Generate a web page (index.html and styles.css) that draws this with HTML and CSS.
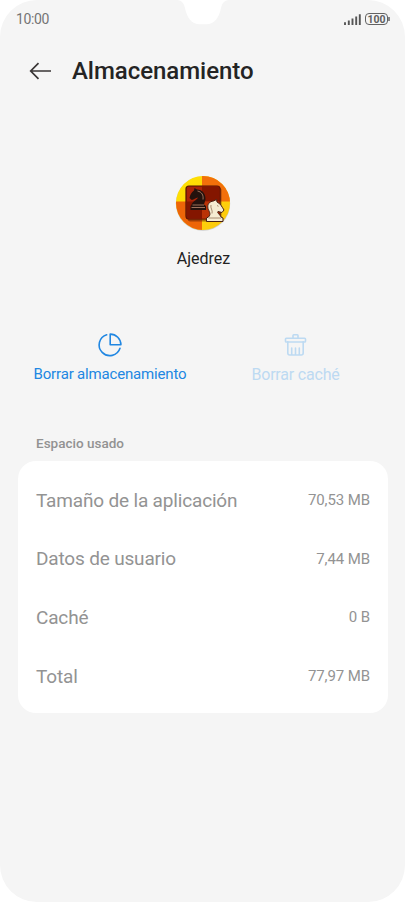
FILE: index.html
```html
<!DOCTYPE html>
<html lang="es">
<head>
<meta charset="utf-8">
<title>Almacenamiento</title>
<link rel="stylesheet" href="styles.css">
</head>
<body>
<main class="screen">
  <svg class="notch" width="52" height="25" viewBox="0 0 52 25" aria-hidden="true"><path d="M0 0C5 .5 7 3.500 8 8C9.800 17 14 24.300 23 24.300H29C38 24.300 42.200 17 44 8C45 3.500 47 .5 52 0Z"/></svg>
  <div class="status">
    <span class="time">10:00</span>
    <span class="indicators">
      <svg width="18" height="13" viewBox="0 0 18 13"><path d="M1 9.200V12M4.800 7.400V12M8.500 5.400V12M12.200 3.500V12M15.800 1.200V12" fill="none" stroke="#555" stroke-width="1.900"/></svg>
      <span class="battery">100</span>
    </span>
  </div>
  <header class="header">
    <svg width="24" height="20" viewBox="0 0 24 20"><path d="M9.500 2.200L1.700 10L9.500 17.800M1.700 10H22" fill="none" stroke="#3a3636" stroke-width="1.700"/></svg>
    <h1>Almacenamiento</h1>
  </header>
  <section class="app">
    <svg width="58" height="58" viewBox="0 0 58 58">
      <defs>
        <clipPath id="round"><circle cx="29" cy="29" r="27"/></clipPath>
        <linearGradient id="gold" x2="1" y2="1"><stop stop-color="#ffe600"/><stop offset="1" stop-color="#fcc410"/></linearGradient>
      </defs>
      <circle cx="29" cy="29.600" r="27.200" fill="#ccc"/>
      <g clip-path="url(#round)">
        <path fill="url(#gold)" d="M0 0H58V58H0Z"/>
        <path fill="#f2700a" d="M28 0H58V27.500H28Z"/><path fill="#ed6508" d="M0 27.500H28V58H0Z"/>
        <rect x="13.500" y="13.500" width="34" height="34" rx="3" fill="#531703" opacity=".5"/>
        <rect x="12" y="12" width="34" height="33" rx="3" fill="#a92408" stroke="#501202" stroke-width="1.200"/>
        <path fill="#841600" d="M28 12.600H45.400V27.500H28ZM12.600 27.500H28V44.400H12.600Z"/>
        <path fill="#ba3307" d="M28 27.500H45.400V44.400H28Z"/>
      </g>
      <path d="M17.500 31C17.500 28 23 26 24 23.500C21.500 24 20 25.800 17.800 26L15.500 24C16 21 17.500 18 20 16.500L20.500 14L23 15.500C28.500 15.500 31.800 20 31.500 25.500L30 30.500L32 32V36H16.500V32Z" fill="#24120d"/>
      <path d="M17.500 33.500H31M18.500 31H30M23.500 17C27.800 18 29.600 21 29 25.500" fill="none" stroke="#bd8a70" stroke-width=".8"/>
      <path d="M34.500 43C37.500 40 35 37.500 34 34.500C33 30 35.500 27.500 39.500 27L42.500 25.500L43 28C46.500 29.500 48 33 50 36L48 38.500L44 37.500C42.500 38.500 46 40.500 47 43L49 44V47.500H32.500V44Z" fill="#f6ecd2" stroke="#472015" stroke-width="1"/>
      <path d="M34.500 44H47M37 31C36 34 39 36 38 39.500M43 31.500L44.500 32.300" fill="none" stroke="#947358" stroke-width=".8"/>
    </svg>
    <span class="app-name">Ajedrez</span>
  </section>
  <nav class="actions">
    <div class="action clear-data">
      <svg width="26" height="26" viewBox="0 0 26 26" fill="none" stroke="currentColor" stroke-width="1.600" stroke-linecap="round" stroke-linejoin="round"><path d="M9.700 2.700A10.700 10.700 0 1 0 23 16.300M13.200 2.100V12.800H23.900A10.700 10.700 0 0 0 13.200 2.100Z"/></svg>
      <span>Borrar almacenamiento</span>
    </div>
    <div class="action clear-cache">
      <svg width="26" height="26" viewBox="0 0 26 26" fill="none" stroke="currentColor" stroke-width="1.600" stroke-linecap="round" stroke-linejoin="round"><rect x="2.500" y="6.300" width="20" height="3.700" rx=".8"/><path d="M10 6V3.600Q10 2.800 10.800 2.800H14.200Q15 2.800 15 3.600V6M4.800 9.700V21Q4.800 23 6.800 23H18.200Q20.200 23 20.200 21V9.700M8.700 16V22.500M12.500 16V22.500M16.300 16V22.500"/></svg>
      <span>Borrar caché</span>
    </div>
  </nav>
  <h2 class="section-title">Espacio usado</h2>
  <dl class="card">
    <div class="row"><dt>Tamaño de la aplicación</dt><dd>70,53 MB</dd></div>
    <div class="row"><dt>Datos de usuario</dt><dd>7,44 MB</dd></div>
    <div class="row"><dt>Caché</dt><dd>0 B</dd></div>
    <div class="row"><dt>Total</dt><dd>77,97 MB</dd></div>
  </dl>
</main>
</body>
</html>
```
FILE: styles.css
```css
* { box-sizing: border-box; }
body { margin: 0; background: #fff; font-family: Roboto, sans-serif; }
svg { display: block; flex: none; }
.screen {
  position: relative;
  width: 405px;
  height: 902px;
  overflow: hidden;
  border-radius: 37px;
  background: #f5f5f5;
}
.notch { position: absolute; top: 0; left: 177px; fill: #fff; }
.status {
  display: flex;
  justify-content: space-between;
  align-items: center;
  height: 38px;
  padding: 0 17px 0 16px;
}
.time { font-size: 14px; line-height: 20px; color: #747474; letter-spacing: -.4px; }
.indicators { display: flex; align-items: center; gap: 3px; }
.battery {
  position: relative;
  width: 23px;
  height: 12px;
  border: 1px solid #626262;
  border-radius: 4px;
  font-size: 10.5px;
  font-weight: 700;
  line-height: 11px;
  text-align: center;
  color: #606060;
}
.battery::after {
  content: "";
  position: absolute;
  top: 3px;
  right: -3px;
  width: 2px;
  height: 4px;
  background: #888;
}
.header { display: flex; align-items: center; gap: 19px; height: 66px; padding-left: 29px; }
h1 { margin: 0; font-size: 24px; line-height: 32px; font-weight: 500; letter-spacing: -.04px; color: #242424; }
.app {
  display: flex;
  flex-direction: column;
  align-items: center;
  gap: 15px;
  padding-top: 70px;
  font-size: 16px;
  line-height: 24px;
  color: #222;
}
.app-name { padding-left: 2px; }
.actions { display: grid; grid-template-columns: 220px 151px; margin-top: 61px; }
.action { display: flex; flex-direction: column; align-items: center; gap: 7px; line-height: 20px; }
.clear-data { gap: 6px; color: #2187e2; font-size: 15px; letter-spacing: -.17px; }
.clear-cache { color: #bddaf2; font-size: 16px; letter-spacing: -.2px; }
.section-title {
  margin: 48px 0 8px 36px;
  font-size: 13.5px;
  line-height: 20px;
  font-weight: 500;
  color: #929292;
}
.card { margin: 0 17px 0 18px; padding: 10px 18px 8px; border-radius: 18px; background: #fff; color: #939393; }
.row { display: flex; align-items: center; justify-content: space-between; height: 58.6px; }
dt { font-size: 19px; letter-spacing: -.17px; }
dd { margin: 0; font-size: 15px; letter-spacing: -.1px; }
```
